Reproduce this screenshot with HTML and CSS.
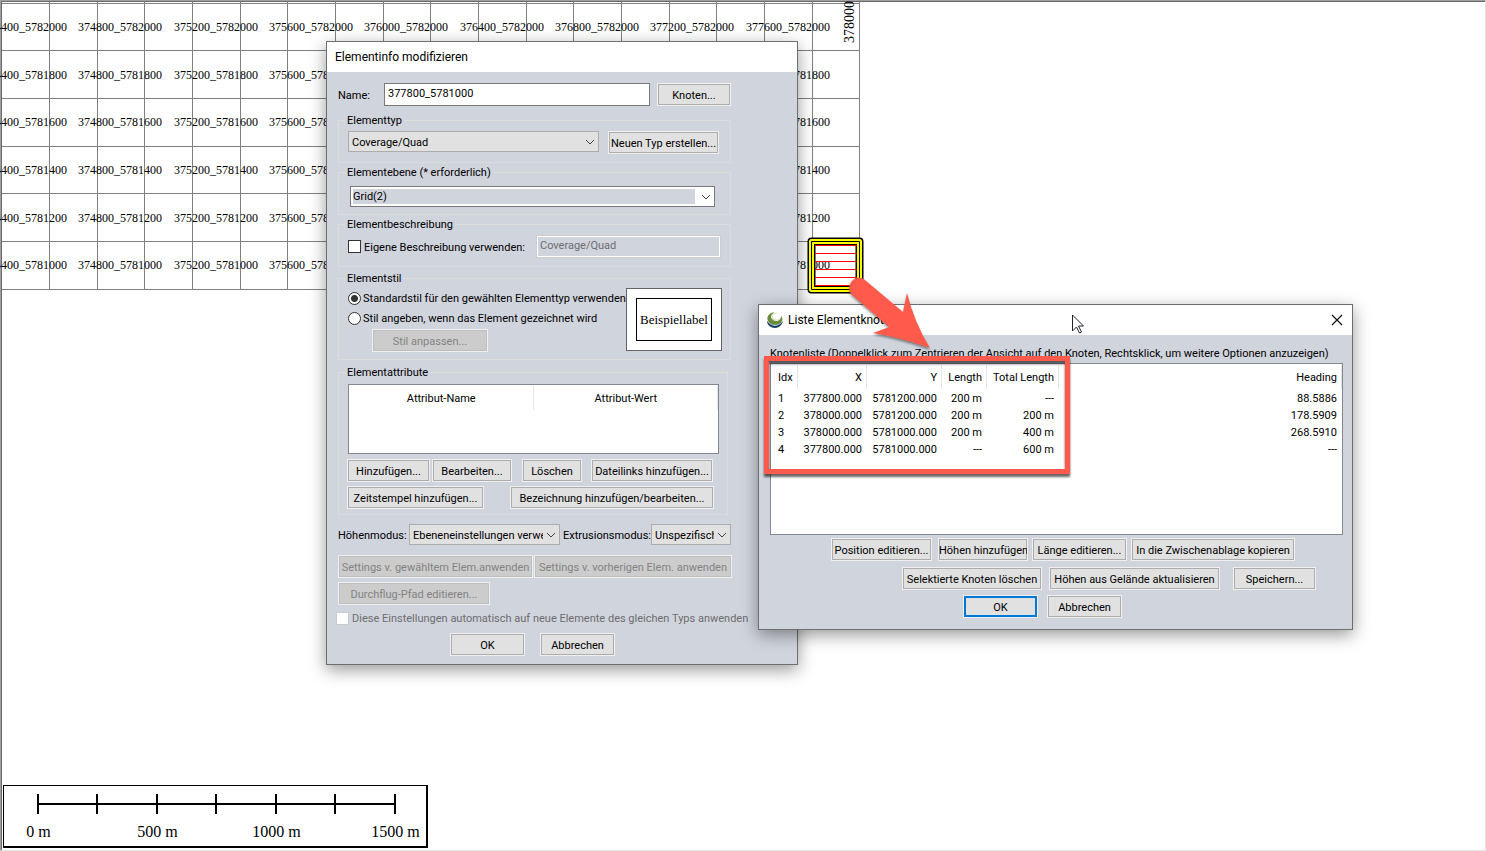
FILE: index.html
```html
<!DOCTYPE html>
<html lang="de">
<head>
    <meta charset="UTF-8">
    <meta name="viewport" content="width=device-width, initial-scale=1.0">
    <title>Elementinfo modifizieren</title>
    <link rel="stylesheet" href="styles.css">
</head>
<body>
    <main class="map">
        <svg class="map-canvas" id="mapCanvas">
            <g id="tileLines" class="tile-lines"></g>
            <g id="tileLabels" class="tile-labels"></g>
            <text class="edge-label" transform="translate(854 43) rotate(-90)">378000</text>

            <!-- selected tile -->
            <g fill="none" stroke-linejoin="round">
                <rect x="811.5" y="241.5" width="48" height="48" stroke="#000" stroke-width="8"/>
                <rect x="811.5" y="241.5" width="48" height="48" stroke="#ff0" stroke-width="5"/>
                <rect x="811.5" y="241.5" width="48" height="48" stroke="#000" stroke-width="1"/>
                <path d="M815 245.5h42M815 253.5h42M815 261.5h42M815 269.5h42M815 277.5h42M815 285.5h42" stroke="#f00"/>
            </g>
        </svg>

        <div class="scale">
            <svg class="scale-bar" width="360" height="20" viewBox="0 0 360 20">
                <path d="M1 10H358M1 0V20M60 0V20M120 0V20M179 0V20M239 0V20M298 0V20M358 0V20" stroke="#000" stroke-width="2"/>
            </svg>
            <div class="scale-labels">
                <span>0 m</span>
                <span>500 m</span>
                <span>1000 m</span>
                <span>1500 m</span>
            </div>
        </div>
    </main>

    <form class="dialog dialog-info">
        <header class="titlebar">
            <h1>Elementinfo modifizieren</h1>
        </header>
        <div class="dialog-body">
            <div class="row name-row">
                <label for="name">Name:</label>
                <input type="text" id="name" value="377800_5781000">
                <button type="button" class="btn w-74">Knoten...</button>
            </div>

            <fieldset class="group group-type">
                <legend>Elementtyp</legend>
                <div class="row">
                    <div class="select">
                        <select aria-label="Elementtyp"><option>Coverage/Quad</option></select>
                        <svg width="10" height="6" viewBox="0 0 10 6"><path d="M1 1l4 4 4-4"/></svg>
                    </div>
                    <button type="button" class="btn">Neuen Typ erstellen...</button>
                </div>
            </fieldset>

            <fieldset class="group group-layer">
                <legend>Elementebene (* erforderlich)</legend>
                <div class="select select-edit">
                    <select aria-label="Elementebene"><option>Grid(2)</option></select>
                    <svg width="10" height="6" viewBox="0 0 10 6"><path d="M1 1l4 4 4-4"/></svg>
                </div>
            </fieldset>

            <fieldset class="group group-desc">
                <legend>Elementbeschreibung</legend>
                <div class="row">
                    <input type="checkbox" id="ownDesc">
                    <label for="ownDesc">Eigene Beschreibung verwenden:</label>
                    <input type="text" aria-label="Beschreibung" value="Coverage/Quad" disabled>
                </div>
            </fieldset>

            <fieldset class="group group-style">
                <legend>Elementstil</legend>
                <div class="row">
                    <div class="style-options">
                        <div class="option">
                            <input type="radio" name="style" id="styleDefault" checked>
                            <label for="styleDefault">Standardstil für den gewählten Elementtyp verwenden</label>
                        </div>
                        <div class="option">
                            <input type="radio" name="style" id="styleCustom">
                            <label for="styleCustom">Stil angeben, wenn das Element gezeichnet wird</label>
                        </div>
                        <button type="button" class="btn" disabled>Stil anpassen...</button>
                    </div>
                    <div class="preview"><span>Beispiellabel</span></div>
                </div>
            </fieldset>

            <fieldset class="group group-attr">
                <legend>Elementattribute</legend>
                <div class="list attr-list">
                    <table>
                        <thead>
                            <tr><th>Attribut-Name</th><th>Attribut-Wert</th></tr>
                        </thead>
                    </table>
                </div>
                <div class="attr-buttons">
                    <button type="button" class="btn w-83">Hinzufügen...</button>
                    <button type="button" class="btn w-80">Bearbeiten...</button>
                    <button type="button" class="btn w-60">Löschen</button>
                    <button type="button" class="btn w-122">Dateilinks hinzufügen...</button>
                </div>
                <div class="attr-buttons spread">
                    <button type="button" class="btn w-137">Zeitstempel hinzufügen...</button>
                    <button type="button" class="btn w-204">Bezeichnung hinzufügen/bearbeiten...</button>
                </div>
            </fieldset>

            <div class="row mode-row">
                <label for="heightMode">Höhenmodus:</label>
                <div class="select height-mode">
                    <select id="heightMode"><option>Ebeneneinstellungen verwenden</option></select>
                    <svg width="10" height="6" viewBox="0 0 10 6"><path d="M1 1l4 4 4-4"/></svg>
                </div>
                <label for="extrusion">Extrusionsmodus:</label>
                <div class="select extrusion-mode">
                    <select id="extrusion"><option>Unspezifisch</option></select>
                    <svg width="10" height="6" viewBox="0 0 10 6"><path d="M1 1l4 4 4-4"/></svg>
                </div>
            </div>

            <div class="settings-buttons">
                <button type="button" class="btn w-195" disabled>Settings v. gewähltem Elem.anwenden</button>
                <button type="button" class="btn w-198" disabled>Settings v. vorherigen Elem. anwenden</button>
                <button type="button" class="btn w-152" disabled>Durchflug-Pfad editieren...</button>
            </div>

            <div class="row auto-row">
                <input type="checkbox" id="autoApply" disabled>
                <label for="autoApply">Diese Einstellungen automatisch auf neue Elemente des gleichen Typs anwenden</label>
            </div>

            <div class="info-footer">
                <button type="button" class="btn w-75">OK</button>
                <button type="button" class="btn w-75">Abbrechen</button>
            </div>
        </div>
    </form>

    <section class="dialog dialog-nodes">
        <header class="titlebar">
            <svg class="app-icon" width="16" height="16" viewBox="0 0 16 16">
                <path d="M0 9c0 4 4 7 8 7s7-3 8-7c-3 4-12 5-16 0z" fill="#123e63"/>
                <path d="M7 0C2 1-1 5 1 9c3 5 12 5 14 0 1-2 0-4-1-5 0 3-2 5-5 5-4 0-5-5-2-9z" fill="#6b8c3c"/>
                <path d="M7 1C4 2 3 5 5 7c2 3 7 2 8-1-1 1-3 2-5 1C5 6 5 3 8 2c2-1 4 0 4 1 0-2-3-3-5-2z" fill="#dfe8c8"/>
                <path d="M1 10c3 4 11 4 14 0-3 5-11 5-14 0z" fill="#fff"/>
            </svg>
            <h2>Liste Elementknoten</h2>
            <button type="button" class="close" aria-label="Schließen">
                <svg width="12" height="12" viewBox="0 0 12 12"><path d="M1 1l10 10M11 1L1 11" stroke="#111" stroke-width="1.2"/></svg>
            </button>
        </header>
        <div class="dialog-body">
            <p class="caption">Knotenliste (Doppelklick zum Zentrieren der Ansicht auf den Knoten, Rechtsklick, um weitere Optionen anzuzeigen)</p>
            <div class="list node-list">
                <table>
                    <colgroup>
                        <col class="col-idx"><col class="col-x"><col class="col-y"><col class="col-len"><col class="col-total"><col>
                    </colgroup>
                    <thead>
                        <tr><th>Idx</th><th>X</th><th>Y</th><th>Length</th><th>Total Length</th><th>Heading</th></tr>
                    </thead>
                    <tbody>
                        <tr><td>1</td><td>377800.000</td><td>5781200.000</td><td>200 m</td><td>---</td><td>88.5886</td></tr>
                        <tr><td>2</td><td>378000.000</td><td>5781200.000</td><td>200 m</td><td>200 m</td><td>178.5909</td></tr>
                        <tr><td>3</td><td>378000.000</td><td>5781000.000</td><td>200 m</td><td>400 m</td><td>268.5910</td></tr>
                        <tr><td>4</td><td>377800.000</td><td>5781000.000</td><td>---</td><td>600 m</td><td>---</td></tr>
                    </tbody>
                </table>
            </div>
            <div class="node-buttons edit-row">
                <button type="button" class="btn w-101">Position editieren...</button>
                <button type="button" class="btn w-90">Höhen hinzufügen</button>
                <button type="button" class="btn w-95">Länge editieren...</button>
                <button type="button" class="btn w-164">In die Zwischenablage kopieren</button>
            </div>
            <div class="node-buttons action-row">
                <button type="button" class="btn w-140">Selektierte Knoten löschen</button>
                <button type="button" class="btn w-171">Höhen aus Gelände aktualisieren</button>
                <button type="button" class="btn w-83">Speichern...</button>
            </div>
            <div class="node-buttons close-row">
                <button type="button" class="btn btn-default w-75">OK</button>
                <button type="button" class="btn w-75">Abbrechen</button>
            </div>
        </div>
    </section>

    <!-- callout over both windows -->
    <div class="highlight"></div>
    <svg class="arrow" width="100" height="90" viewBox="840 270 100 90">
        <path d="M865 280C856 273 845 284 851 294L889 327 873 333Q902 338 930 348 914 322 907 293L903 312Z" fill="#ff5a4b"/>
    </svg>
    <svg class="cursor" width="14" height="20" viewBox="0 0 14 20">
        <path d="M1.5 1v16l4-4 3 6 2-1-3-6h5z" fill="#fff" stroke="#223" stroke-width="1"/>
    </svg>

    <script src="script.js"></script>
</body>
</html>
```

FILE: styles.css
```css
* {
    margin: 0;
    padding: 0;
    box-sizing: border-box;
}

html,
body {
    height: 100%;
}

body {
    position: relative;
    overflow: hidden;
    background: #fff;
    color: #000;
    font-family: Roboto, 'Liberation Sans', Arial, sans-serif;
    font-size: 11px;
    line-height: 13px;
}

input,
select,
button {
    font: inherit;
    color: inherit;
}

/* Map */
.map {
    height: 100%;
    display: flex;
    flex-direction: column;
    align-items: flex-start;
    justify-content: flex-end;
    padding: 0 0 2px 1px;
    border: 1px solid #a0a0a0;
    border-right-color: #e3e3e3;
    border-bottom-color: #e3e3e3;
    box-shadow: inset 1px 1px 0 #696969;
    font-family: 'Liberation Serif', 'Times New Roman', serif;
}

.map-canvas {
    position: absolute;
    top: 0;
    left: 0;
    width: 100%;
    height: 100%;
}

.tile-lines {
    stroke: #808080;
    shape-rendering: crispEdges;
}

.tile-labels {
    font-size: 12px;
    text-anchor: middle;
}

.edge-label {
    font-size: 14px;
}

.scale {
    position: relative;
    width: 425px;
    margin-left: 1px;
    padding: 8px 6px 4px 33px;
    background: #fff;
    border: 1px solid #000;
    border-width: 1px 2px 2px 1px;
}

.scale-bar {
    display: block;
}

.scale-labels {
    display: grid;
    grid-template-columns: repeat(4, 119px);
    width: 476px;
    margin: 8px 0 0 -58px;
    font-size: 16px;
    line-height: 20px;
    text-align: center;
}

/* Windows */
.dialog {
    position: absolute;
    background: #d0d4dd;
    border: 1px solid #6c6e72;
    box-shadow: 0 5px 16px rgba(0, 0, 0, 0.4);
}

.dialog-info {
    left: 326px;
    top: 41px;
    width: 472px;
}

.dialog-nodes {
    left: 758px;
    top: 304px;
    width: 595px;
}

.titlebar {
    display: flex;
    align-items: center;
    height: 30px;
    padding: 0 8px;
    background: #fff;
}

.titlebar h1,
.titlebar h2 {
    font-size: 12px;
    font-weight: 400;
    line-height: 16px;
}

.app-icon {
    margin-right: 5px;
}

.close {
    display: flex;
    margin-left: auto;
    padding: 1px;
    border: none;
    background: none;
}

.dialog-info .dialog-body {
    padding: 11px 66px 8px 11px;
}

.dialog-nodes .dialog-body {
    padding: 12px 9px 11px 11px;
}

.row {
    display: flex;
    align-items: center;
    white-space: nowrap;
}

/* Controls */
.btn {
    flex: none;
    height: 23px;
    padding-top: 1px;
    background: #e1e1e1;
    border: 1px solid #f0f0f0;
    box-shadow: inset 0 0 0 1px #adadad;
    white-space: nowrap;
    overflow: hidden;
}

.btn:disabled {
    background: #ccc;
    color: #838383;
    box-shadow: inset 0 0 0 1px #bfbfbf;
}

.btn-default {
    box-shadow: inset 0 0 0 2px #0078d7;
}

.w-60 { width: 60px; }
.w-74 { width: 74px; }
.w-75 { width: 75px; }
.w-80 { width: 80px; }
.w-83 { width: 83px; }
.w-90 { width: 90px; }
.w-95 { width: 95px; }
.w-101 { width: 101px; }
.w-122 { width: 122px; }
.w-137 { width: 137px; }
.w-140 { width: 140px; }
.w-152 { width: 152px; }
.w-164 { width: 164px; }
.w-171 { width: 171px; }
.w-195 { width: 195px; }
.w-198 { width: 198px; }
.w-204 { width: 204px; }

input[type="text"] {
    height: 23px;
    padding: 0 3px 3px;
    background: #fff;
    border: 1px solid #7a7a7a;
}

input[type="text"]:disabled {
    background: #d0d4dd;
    border-color: #ccc;
    box-shadow: inset 0 0 0 1px #fff;
    color: #6d6d6d;
}

input[type="checkbox"],
input[type="radio"] {
    appearance: none;
    flex: none;
    width: 13px;
    height: 13px;
    margin-right: 3px;
    background: #fff;
    border: 1px solid #333;
}

input[type="radio"] {
    margin-right: 2px;
    border-radius: 50%;
}

input[type="radio"]:checked {
    background: radial-gradient(circle, #333 3px, #fff 4px);
}

input[type="checkbox"]:disabled {
    border-color: #ccc;
}

input[type="checkbox"]:disabled + label {
    color: #6d6d6d;
}

.select {
    position: relative;
    height: 21px;
}

.select select {
    appearance: none;
    display: block;
    width: 100%;
    height: 100%;
    padding: 1px 16px 0 3px;
    background: #e1e1e1;
    border: 1px solid #adadad;
    border-radius: 0;
}

.select svg {
    position: absolute;
    right: 4px;
    top: 8px;
    fill: none;
    stroke: #444;
    pointer-events: none;
}

.select-edit select {
    padding: 0 18px 1px 2px;
    background: linear-gradient(#d0d4dd, #d0d4dd) 2px 2px / calc(100% - 21px) calc(100% - 4px) no-repeat #fff;
    border-color: #7a7a7a;
}

.list {
    background: #fff;
    border: 1px solid #828790;
}

.list table {
    width: 100%;
    table-layout: fixed;
    border-collapse: collapse;
}

.list th {
    height: 26px;
    font-weight: 400;
    background: linear-gradient(#e5e5e5, #e5e5e5) right 1px / 1px 24px no-repeat;
}

/* Element info */
.row label,
.option label {
    padding-top: 1px;
}

.name-row {
    margin-bottom: 8px;
}

.name-row label {
    width: 46px;
}

.name-row input {
    flex: 1;
    min-width: 0;
    margin-right: 7px;
}

.group {
    min-width: 0;
    margin-bottom: 3px;
    border: 1px solid #dcdcdc;
}

.group legend {
    margin-left: -3px;
    padding: 0 2px;
}

.group-type {
    padding: 4px 11px 8px 9px;
}

.group-type .row {
    align-items: flex-start;
    gap: 9px;
}

.group-type .select {
    flex: 1;
}

.group-type .btn {
    width: 111px;
}

.group-layer {
    padding: 7px 15px 7px 9px;
}

.group-layer .select {
    margin-left: 2px;
}

.group-desc {
    margin-bottom: 5px;
    padding: 4px 9px 8px;
}

.group-desc input[type="text"] {
    width: 185px;
    margin-left: auto;
}

.group-style {
    margin-bottom: 6px;
    padding: 3px 8px 7px 9px;
}

.group-style .row {
    justify-content: space-between;
    align-items: flex-start;
}

.style-options {
    flex: 1;
    min-width: 0;
}

.option {
    display: flex;
    align-items: center;
    height: 20px;
}

.style-options .btn {
    width: 116px;
    margin: 1px 0 0 24px;
}

.preview {
    flex: none;
    width: 96px;
    height: 63px;
    padding: 9px;
    background: #fff;
    border: 1px solid #646464;
}

.preview span {
    display: block;
    height: 100%;
    border: 1px solid #000;
    font-family: 'Liberation Serif', 'Times New Roman', serif;
    font-size: 13px;
    line-height: 41px;
    text-align: center;
}

.group-attr {
    margin: 0 3px 9px 0;
    padding: 5px 8px 5px 9px;
}

.attr-list {
    height: 70px;
    margin-bottom: 5px;
}

.attr-buttons {
    display: flex;
    gap: 2px;
    margin: 0 5px 0 -1px;
}

.attr-buttons .w-60 {
    margin: 0 7px 0 8px;
}

.spread {
    justify-content: space-between;
    margin-top: 4px;
}

.mode-row {
    margin-bottom: 10px;
}

.mode-row label {
    width: 71px;
}

.height-mode {
    width: 151px;
    margin-right: 3px;
}

.mode-row .height-mode + label {
    width: 88px;
}

.extrusion-mode {
    width: 80px;
}

.settings-buttons {
    display: flex;
    flex-wrap: wrap;
    gap: 4px 1px;
    margin: 0 -1px 6px 0;
}

.auto-row {
    margin: 0 -10px 8px -2px;
}

.info-footer {
    display: flex;
    gap: 15px;
    padding-left: 112px;
}

/* Node list */
.caption {
    margin-bottom: 3px;
    white-space: nowrap;
}

.node-list {
    height: 172px;
    margin-bottom: 3px;
}

.node-list td {
    height: 17px;
}

.node-list th,
.node-list td {
    padding: 0 5px;
    text-align: right;
}

.node-list th:first-child,
.node-list td:first-child {
    padding: 0 0 0 7px;
    text-align: left;
}

.col-idx { width: 27px; }
.col-x { width: 69px; }
.col-y { width: 75px; }
.col-len { width: 45px; }
.col-total { width: 72px; }

.node-buttons {
    display: flex;
    gap: 4px;
    margin-bottom: 6px;
}

.edit-row {
    padding-left: 61px;
}

.edit-row .w-101 {
    margin-right: 2px;
}

.action-row {
    gap: 7px;
    margin-bottom: 5px;
    padding-left: 132px;
}

.action-row .w-83 {
    margin-left: 6px;
}

.close-row {
    gap: 9px;
    margin-bottom: 0;
    padding-left: 193px;
}

/* Callout */
.highlight {
    position: absolute;
    left: 764px;
    top: 356px;
    width: 306px;
    height: 118px;
    border: 5px solid #ff5a4b;
    filter: drop-shadow(0 3px 1px rgba(0, 0, 0, 0.6));
}

.arrow {
    position: absolute;
    left: 840px;
    top: 270px;
    filter: drop-shadow(0 2px 1px rgba(0, 0, 0, 0.4));
}

.cursor {
    position: absolute;
    left: 1071px;
    top: 314px;
}
```

FILE: script.js
```js
const SVG_NS = 'http://www.w3.org/2000/svg';
const tileLines = document.getElementById('tileLines');
const tileLabels = document.getElementById('tileLabels');

const TILE = 47.67;
const LEFT = 1.4;
const TOP = 2.6;
const COLS = 18;
const ROWS = 6;

function addLine(x1, y1, x2, y2) {
    const line = document.createElementNS(SVG_NS, 'line');
    line.setAttribute('x1', x1);
    line.setAttribute('y1', y1);
    line.setAttribute('x2', x2);
    line.setAttribute('y2', y2);
    tileLines.appendChild(line);
}

function addLabel(x, y, content) {
    const text = document.createElementNS(SVG_NS, 'text');
    text.setAttribute('x', x);
    text.setAttribute('y', y);
    text.textContent = content;
    tileLabels.appendChild(text);
}

const right = Math.round(LEFT + COLS * TILE) + 0.5;

for (let col = 1; col <= COLS; col++) {
    const x = Math.round(LEFT + col * TILE) + 0.5;
    addLine(x, 2, x, 289);
}

for (let row = 0; row <= ROWS; row++) {
    const y = Math.round(TOP + row * TILE) + 0.5;
    addLine(2, y, right, y);
}

// one label for every second tile, named after its lower left corner
for (let row = 0; row < ROWS; row++) {
    for (let i = 0; i < 9; i++) {
        const east = 374400 + i * 400;
        const north = 5782000 - row * 200;
        addLabel(Math.round(25 + i * 2 * TILE), Math.round(31 + row * TILE), east + '_' + north);
    }
}
```
